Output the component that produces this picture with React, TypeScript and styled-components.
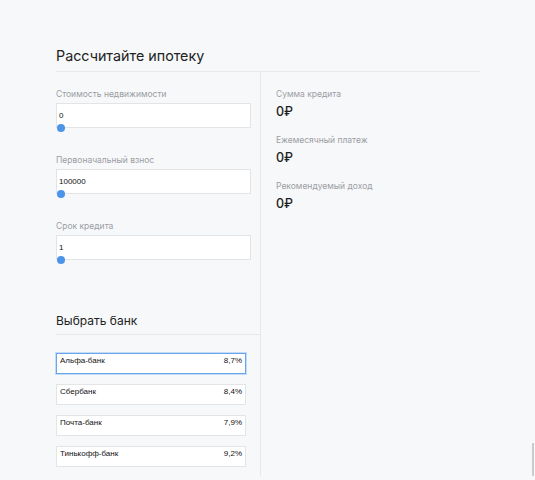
import * as React from 'react';
import styled, { createGlobalStyle } from 'styled-components';

const GlobalStyle = createGlobalStyle`
  html, body {
    margin: 0;
    padding: 0;
    background: #f7f8fa;
  }
  body {
    font-family: Inter, "Noto Sans", sans-serif;
    color: #222;
  }
`;

const StyledPage = styled.div`
  position: relative;
  min-height: 480px;
  padding: 46px 0 0 56px;
  box-sizing: border-box;
`;

const StyledCalculator = styled.div`
  width: 424px;
`;

const StyledTitle = styled.h2`
  margin: 0;
  padding-bottom: 5px;
  font-size: 14.3px;
  font-weight: 400;
  line-height: 20px;
  color: #222;
  border-bottom: 1px solid #e6e8ec;
`;

const StyledColumns = styled.div`
  display: grid;
  grid-template-columns: 205px 1fr;
  align-items: start;
`;

const StyledLeftColumn = styled.div`
  box-sizing: border-box;
  padding: 16px 0 9px;
  border-right: 1px solid #e6e8ec;
`;

const StyledRightColumn = styled.div`
  padding: 16px 0 0 15px;
  display: flex;
  flex-direction: column;
  gap: 13px;
`;

const StyledField = styled.div`
  margin-bottom: 26px;
`;

const StyledLabel = styled.div`
  font-size: 8.5px;
  line-height: 12px;
  color: #9a9da2;
  margin-bottom: 3px;
`;

const StyledInputBox = styled.div`
  position: relative;
  box-sizing: border-box;
  width: 195px;
  height: 25px;
  padding: 0 2px;
  display: flex;
  align-items: center;
  background: #fff;
  border: 1px solid #e3e4e6;
  font-family: "Liberation Sans", Arial, sans-serif;
  font-size: 8px;
  color: #111;
`;

const StyledThumb = styled.span`
  position: absolute;
  left: 0;
  top: 20px;
  width: 8px;
  height: 8px;
  border-radius: 50%;
  background: #4b94ea;
`;

const StyledSubTitle = styled.h3`
  margin: 52px -1px 0 0;
  padding-bottom: 4px;
  font-size: 12px;
  font-weight: 400;
  line-height: 18px;
  color: #222;
  border-bottom: 1px solid #e6e8ec;
`;

const StyledBankList = styled.div`
  display: flex;
  flex-direction: column;
  gap: 10px;
  margin-top: 18px;
`;

const StyledBankItem = styled.div<{ $active?: boolean }>`
  box-sizing: border-box;
  width: 190px;
  height: 21px;
  padding: 1px 3px 0;
  display: flex;
  justify-content: space-between;
  align-items: flex-start;
  background: #fff;
  border: 1px solid ${(p) => (p.$active ? '#6aa5ec' : '#e3e4e6')};
  box-shadow: ${(p) => (p.$active ? '0 0 0 1px #c2dbf6' : 'none')};
  font-family: "Liberation Sans", Arial, sans-serif;
  font-size: 8px;
  line-height: 11px;
  color: #111;
`;

const StyledSummary = styled.div``;

const StyledSummaryValue = styled.div`
  font-size: 12.5px;
  font-weight: 500;
  line-height: 18px;
  color: #1e1e1e;
`;

const StyledScrollThumb = styled.div`
  position: absolute;
  right: 1px;
  top: 443px;
  width: 2px;
  height: 33px;
  background: #c9cbcf;
`;

const fields = [
  { label: 'Стоимость недвижимости', value: '0' },
  { label: 'Первоначальный взнос', value: '100000' },
  { label: 'Срок кредита', value: '1' },
];

const banks = [
  { name: 'Альфа-банк', rate: '8,7%' },
  { name: 'Сбербанк', rate: '8,4%' },
  { name: 'Почта-банк', rate: '7,9%' },
  { name: 'Тинькофф-банк', rate: '9,2%' },
];

const summary = ['Сумма кредита', 'Ежемесячный платеж', 'Рекомендуемый доход'];

export default function App() {
  return (
    <>
      <GlobalStyle />
      <StyledPage>
        <StyledCalculator>
          <StyledTitle>Рассчитайте ипотеку</StyledTitle>
          <StyledColumns>
            <StyledLeftColumn>
              {fields.map((f) => (
                <StyledField key={f.label}>
                  <StyledLabel>{f.label}</StyledLabel>
                  <StyledInputBox>
                    {f.value}
                    <StyledThumb />
                  </StyledInputBox>
                </StyledField>
              ))}
              <StyledSubTitle>Выбрать банк</StyledSubTitle>
              <StyledBankList>
                {banks.map((b, i) => (
                  <StyledBankItem key={b.name} $active={i === 0}>
                    <span>{b.name}</span>
                    <span>{b.rate}</span>
                  </StyledBankItem>
                ))}
              </StyledBankList>
            </StyledLeftColumn>
            <StyledRightColumn>
              {summary.map((s) => (
                <StyledSummary key={s}>
                  <StyledLabel>{s}</StyledLabel>
                  <StyledSummaryValue>0₽</StyledSummaryValue>
                </StyledSummary>
              ))}
            </StyledRightColumn>
          </StyledColumns>
        </StyledCalculator>
        <StyledScrollThumb />
      </StyledPage>
    </>
  );
}
